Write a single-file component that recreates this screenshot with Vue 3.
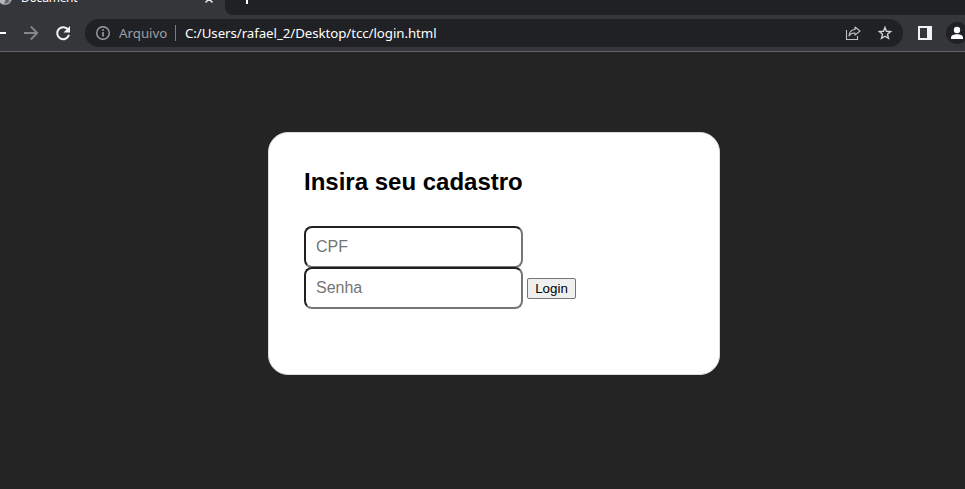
<script setup>
import { ref } from 'vue'

const cpf = ref('')
const senha = ref('')
</script>

<template>
  <div class="window">
    <header class="browser">
      <div class="tabs">
        <div class="tab">
          <svg class="globe" width="14" height="14" viewBox="0 0 14 14">
            <circle cx="7" cy="7" r="6.2" fill="#5f6368" stroke="#9aa0a6" stroke-width="1.6" />
            <path d="M1 7l5 .3 1.5 2.2L6 13C3 12.600 1 10 1 7zM9 1.500l4 4.500-1 4-3-1.500V6L7 4z" fill="#b5b8bc" />
          </svg>
          <span class="tab-title">Document</span>
          <svg class="close" width="10" height="10" viewBox="0 0 10 10">
            <path d="M1.500 1.500l7 7m0-7l-7 7" stroke="#e8eaed" stroke-width="1.500" />
          </svg>
        </div>
        <div class="strip">
          <svg class="plus" width="12" height="12" viewBox="0 0 12 12">
            <path d="M6 0v12M0 6h12" stroke="#fff" stroke-width="2" />
          </svg>
        </div>
      </div>
      <div class="toolbar">
        <svg class="back" width="6" height="16" viewBox="0 0 6 16">
          <path d="M0 8h6" stroke="#fff" stroke-width="2" />
        </svg>
        <svg class="forward" width="16" height="16" viewBox="0 0 16 16" fill="none" stroke="#85878a" stroke-width="1.800">
          <path d="M1 8h13M7.800 1.500L14.300 8l-6.500 6.500" />
        </svg>
        <svg class="reload" width="16" height="16" viewBox="0 0 16 16">
          <path d="M13.300 5A6 6 0 1 0 14 9.800" fill="none" stroke="#f1f3f4" stroke-width="2" />
          <path d="M15 1v6.500H8.500z" fill="#f1f3f4" />
        </svg>
        <div class="omnibox">
          <svg class="info" width="16" height="16" viewBox="0 0 16 16">
            <circle cx="8" cy="8" r="6.300" fill="none" stroke="#9aa0a6" stroke-width="1.400" />
            <path d="M8 7v4.500M8 4.300v1.700" stroke="#9aa0a6" stroke-width="1.600" />
          </svg>
          <span class="scheme">Arquivo</span>
          <span class="divider"></span>
          <span class="url">C:/Users/rafael_2/Desktop/tcc/login.html</span>
          <svg class="share" width="16" height="16" viewBox="0 0 16 16" fill="none" stroke="#bdc1c6" stroke-width="1.100">
            <path d="M1.500 5v9.500h11V11" />
            <path d="M10 2l5 4-5 4.200V8C7 7.800 5.200 8.800 4 11c.2-3.600 2.200-6.200 6-6.500z" stroke-linejoin="round" />
          </svg>
          <svg class="star" width="16" height="16" viewBox="0 0 16 16">
            <path d="M8 2.500l1.500 3.800 4.100.3-3.100 2.700 1 4L8 11.200l-3.500 2.100 1-4-3.100-2.700 4.100-.3z" fill="none" stroke="#d0d3d6" stroke-width="1.400" />
          </svg>
        </div>
        <svg class="panel" width="14" height="14" viewBox="0 0 14 14">
          <path d="M0 0h14v14H0zM2 2v10h7V2z" fill="#f1f3f4" fill-rule="evenodd" />
        </svg>
        <svg class="profile" width="22" height="22" viewBox="0 0 22 22">
          <circle cx="11" cy="11" r="11" fill="#202124" />
          <circle cx="11" cy="8" r="3.200" fill="#fff" />
          <path d="M5 17v-1.500c0-2 3-3.200 6-3.200s6 1.200 6 3.200V17z" fill="#fff" />
        </svg>
      </div>
    </header>
    <main class="page">
      <form class="card" @submit.prevent>
        <h1>Insira seu cadastro</h1>
        <input v-model="cpf" class="field" type="text" placeholder="CPF" />
        <div class="row">
          <input v-model="senha" class="field" type="password" placeholder="Senha" />
          <button class="login" type="submit">Login</button>
        </div>
      </form>
    </main>
  </div>
</template>

<style>
body {
  background: #242424;
}
</style>

<style scoped>
.window {
  height: 489px;
  display: flex;
  flex-direction: column;
  overflow: hidden;
  background: #242424;
}
svg {
  display: block;
  flex: none;
}
.browser {
  flex: none;
  height: 52px;
  box-sizing: border-box;
  background: #35363a;
  border-bottom: 1px solid #606162;
  font-family: "Noto Sans", "Open Sans", sans-serif;
}
.tabs {
  height: 15px;
  display: flex;
}
.tab {
  width: 225px;
  height: 15px;
  display: flex;
  overflow: hidden;
}
.globe {
  margin: -9px 0 0 -2px;
}
.tab-title {
  width: 182px;
  margin: -10px 0 0 9px;
  color: #fff;
  font-size: 12px;
  line-height: 16px;
  letter-spacing: -0.35px;
}
.close {
  margin-top: -6px;
  margin-left: 1px;
}
.strip {
  flex: 1;
  overflow: hidden;
  background: #202124;
  border-bottom-left-radius: 8px;
}
.plus {
  margin: -8px 0 0 16px;
}
.toolbar {
  height: 36px;
  display: flex;
  align-items: center;
}
.forward {
  margin-left: 17px;
}
.reload {
  margin-left: 16px;
}
.omnibox {
  width: 818px;
  height: 28px;
  margin-left: 14px;
  padding: 0 10px;
  box-sizing: border-box;
  flex: none;
  display: flex;
  align-items: center;
  border-radius: 14px;
  background: #202124;
  font-size: 13.3px;
  line-height: 20px;
  white-space: nowrap;
}
.scheme {
  width: 49px;
  margin-left: 8px;
  color: #9aa0a6;
}
.divider {
  width: 1px;
  height: 16px;
  margin: 0 9px 0 7px;
  background: #7b7f84;
}
.url {
  color: #fff;
  letter-spacing: -0.07px;
}
.share {
  margin-left: auto;
}
.star {
  margin-left: 16px;
}
.panel {
  margin-left: 15px;
}
.profile {
  margin-left: 14px;
}
.page {
  flex: 1;
  padding-top: 80px;
  padding-left: 268px;
  font-family: "Liberation Sans", Arial, sans-serif;
}
.card {
  width: 452px;
  height: 243px;
  box-sizing: border-box;
  padding: 35px;
  border: 1px solid #dcdcdc;
  border-radius: 20px;
  background: #fff;
}
h1 {
  margin: 0 0 30px;
  color: #000;
  font-size: 24px;
  line-height: 28px;
  white-space: nowrap;
}
.field {
  display: block;
  width: 219px;
  height: 42px;
  margin: 0;
  padding: 0 10px;
  box-sizing: border-box;
  border: 2px solid;
  border-color: #202020 #767676 #767676 #202020;
  border-radius: 8px;
  background: #fff;
  outline: none;
  font-family: inherit;
  font-size: 16px;
}
.field::placeholder {
  color: #757575;
}
.row {
  display: flex;
  align-items: center;
  gap: 4px;
  margin-top: -1px;
}
.login {
  width: 49px;
  height: 21px;
  margin: 1px 0 0;
  padding: 0;
  box-sizing: border-box;
  border: 1px solid #767676;
  border-radius: 2px;
  background: #efefef;
  color: #000;
  font-family: inherit;
  font-size: 13.333px;
  line-height: 19px;
}
</style>
